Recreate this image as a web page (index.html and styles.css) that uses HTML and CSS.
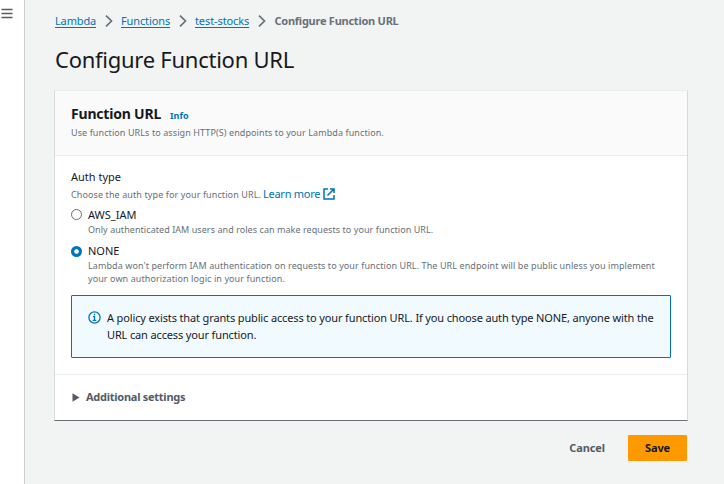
FILE: index.html
```html
<!DOCTYPE html>
<html lang="en">
<head>
<meta charset="utf-8">
<title>Configure Function URL</title>
<link rel="stylesheet" href="styles.css">
</head>
<body>
<aside class="rail">
  <svg width="12" height="12" viewBox="0 0 12 12"><path d="M0.5 1.5h11M0.5 5.5h11M0.5 9.5h11"/></svg>
</aside>
<main class="main">
  <nav class="crumbs">
    <a href="#" class="c1">Lambda</a>
    <svg class="chev" width="8" height="12" viewBox="0 0 8 12"><path d="M1 0.7l5.5 5.3L1 11.3"/></svg>
    <a href="#" class="c2">Functions</a>
    <svg class="chev" width="8" height="12" viewBox="0 0 8 12"><path d="M1 0.7l5.5 5.3L1 11.3"/></svg>
    <a href="#" class="c3">test-stocks</a>
    <svg class="chev" width="8" height="12" viewBox="0 0 8 12"><path d="M1 0.7l5.5 5.3L1 11.3"/></svg>
    <span class="current">Configure Function URL</span>
  </nav>
  <h1>Configure Function URL</h1>
  <section class="card">
    <header class="card-head">
      <div class="title-row"><h2>Function URL</h2><a href="#" class="info">Info</a></div>
      <p class="small">Use function URLs to assign HTTP(S) endpoints to your Lambda function.</p>
    </header>
    <div class="card-body">
      <div class="label">Auth type</div>
      <div class="hint"><span class="small">Choose the auth type for your function URL.</span><a href="#" class="learn">Learn more</a>
        <svg width="12" height="12" viewBox="0 0 12 12"><path d="M5 1H1v10h10V7M7 1h4v4M11 1L4.5 7.5"/></svg>
      </div>
      <div class="option"><i class="radio"></i><div>
        <div class="name">AWS_IAM</div>
        <p class="small iam">Only authenticated IAM users and roles can make requests to your function URL.</p>
      </div></div>
      <div class="option second"><i class="radio on"></i><div>
        <div class="name">NONE</div>
        <p class="small">Lambda won't perform IAM authentication on requests to your function URL. The URL endpoint will be public unless you implement<br>your own authorization logic in your function.</p>
      </div></div>
      <div class="alert">
        <svg width="13" height="13" viewBox="0 0 13 13"><circle cx="6.5" cy="6.5" r="5.6"/><path d="M6.5 2.8v1.5M5 5.7h1.5v3.5M4.7 9.4h3.6"/></svg>
        <p>A policy exists that grants public access to your function URL. If you choose auth type NONE, anyone with the<br>URL can access your function.</p>
      </div>
    </div>
    <div class="more"><svg width="8" height="9" viewBox="0 0 8 9"><path d="M0.5 0.3v8.4L7.5 4.5z"/></svg><span>Additional settings</span></div>
  </section>
  <footer class="actions"><button class="cancel">Cancel</button><button class="save">Save</button></footer>
</main>
</body>
</html>
```
FILE: styles.css
```css
* { box-sizing: border-box; }
body { margin: 0; display: flex; width: 724px; height: 484px; overflow: hidden; background: #f2f3f3; color: #16191f; font: 11px/17px "Noto Sans", "Open Sans", sans-serif; white-space: nowrap; }
h1, h2, p { margin: 0; }
a { color: #0073bb; text-decoration: none; }
svg { fill: none; flex: none; }
.rail { flex: none; width: 25px; background: #fff; border-right: 1px solid #c9d0d0; padding: 8px 0 0 1px; }
.rail svg { stroke: #545b64; stroke-width: 1.3; display: block; }
.main { flex: 1; min-width: 0; padding: 12px 36px 0 30px; }
.crumbs { display: flex; align-items: center; height: 18px; }
.crumbs a, .current { margin-bottom: 1px; }
.crumbs a { text-decoration: underline; text-underline-offset: 2px; }
.c1 { width: 41px; letter-spacing: -0.15px; }
.c2 { width: 49px; letter-spacing: -0.12px; }
.c3 { width: 54px; letter-spacing: -0.1px; }
.chev { stroke: #687078; stroke-width: 1.7; margin: 0 8px 0 9px; }
.current { font-weight: 700; color: #687078; letter-spacing: -0.25px; padding-left: 0.5px; }
h1 { font-size: 22px; font-weight: 400; line-height: 30px; margin-top: 14px; letter-spacing: -0.26px; }
.card { margin: 16px 0 0 -1px; height: 331px; background: #fff; border: 1px solid #d5dbdb; border-top-color: #eaeded; border-bottom-color: #687078; }
.card-head { height: 65px; background: #fafafa; border-bottom: 1px solid #eaeded; padding: 13px 16px 0; }
.title-row { display: flex; align-items: baseline; height: 22px; }
h2 { font-size: 14px; line-height: 20px; font-weight: 700; letter-spacing: -0.2px; }
.info { font-size: 9px; font-weight: 700; margin-left: 9px; }
.small { font-size: 9px; line-height: 13px; color: #687078; letter-spacing: 0.09px; }
.iam { letter-spacing: 0.06px; }
.card-body { padding: 12px 16px 0; height: 218px; }
.hint { display: flex; align-items: center; height: 17px; }
.hint .small { padding-top: 1px; letter-spacing: 0.1px; }
.learn { margin-left: 2px; letter-spacing: -0.25px; }
.hint svg { stroke: #0073bb; stroke-width: 1.5; margin-left: 3px; }
.option { display: flex; margin-top: 4px; }
.option.second { margin-top: 6px; }
.radio { flex: none; width: 11px; height: 11px; margin: 3px 6px 0 0; border: 1px solid #687078; border-radius: 50%; }
.radio.on { margin-top: 4px; border: none; background: radial-gradient(circle, #fff 1.9px, #0073bb 2.6px); }
.alert { display: flex; height: 63px; margin-top: 10px; background: #f1faff; border: 1px solid #0073bb; border-radius: 1px; padding: 13px 16px; }
.alert p { letter-spacing: -0.14px; }
.alert svg { stroke: #0073bb; stroke-width: 1.3; margin: 2px 6px 0 0; }
.more { display: flex; align-items: center; height: 46px; border-top: 1px solid #eaeded; padding-left: 17px; color: #545b64; font-weight: 700; letter-spacing: -0.26px; }
.more span { margin-bottom: 2px; }
.more svg { fill: #545b64; margin: 0 6px 0 0; }
.actions { display: flex; justify-content: flex-end; margin: 14px 1px 0 0; }
button { font: 700 11px/17px "Noto Sans", "Open Sans", sans-serif; border: 0; padding: 0 0 2px; height: 26px; background: none; color: #545b64; letter-spacing: -0.1px; }
.save { width: 59px; margin-left: 23px; background: #f90; color: #16191f; border-radius: 1px; }
```
